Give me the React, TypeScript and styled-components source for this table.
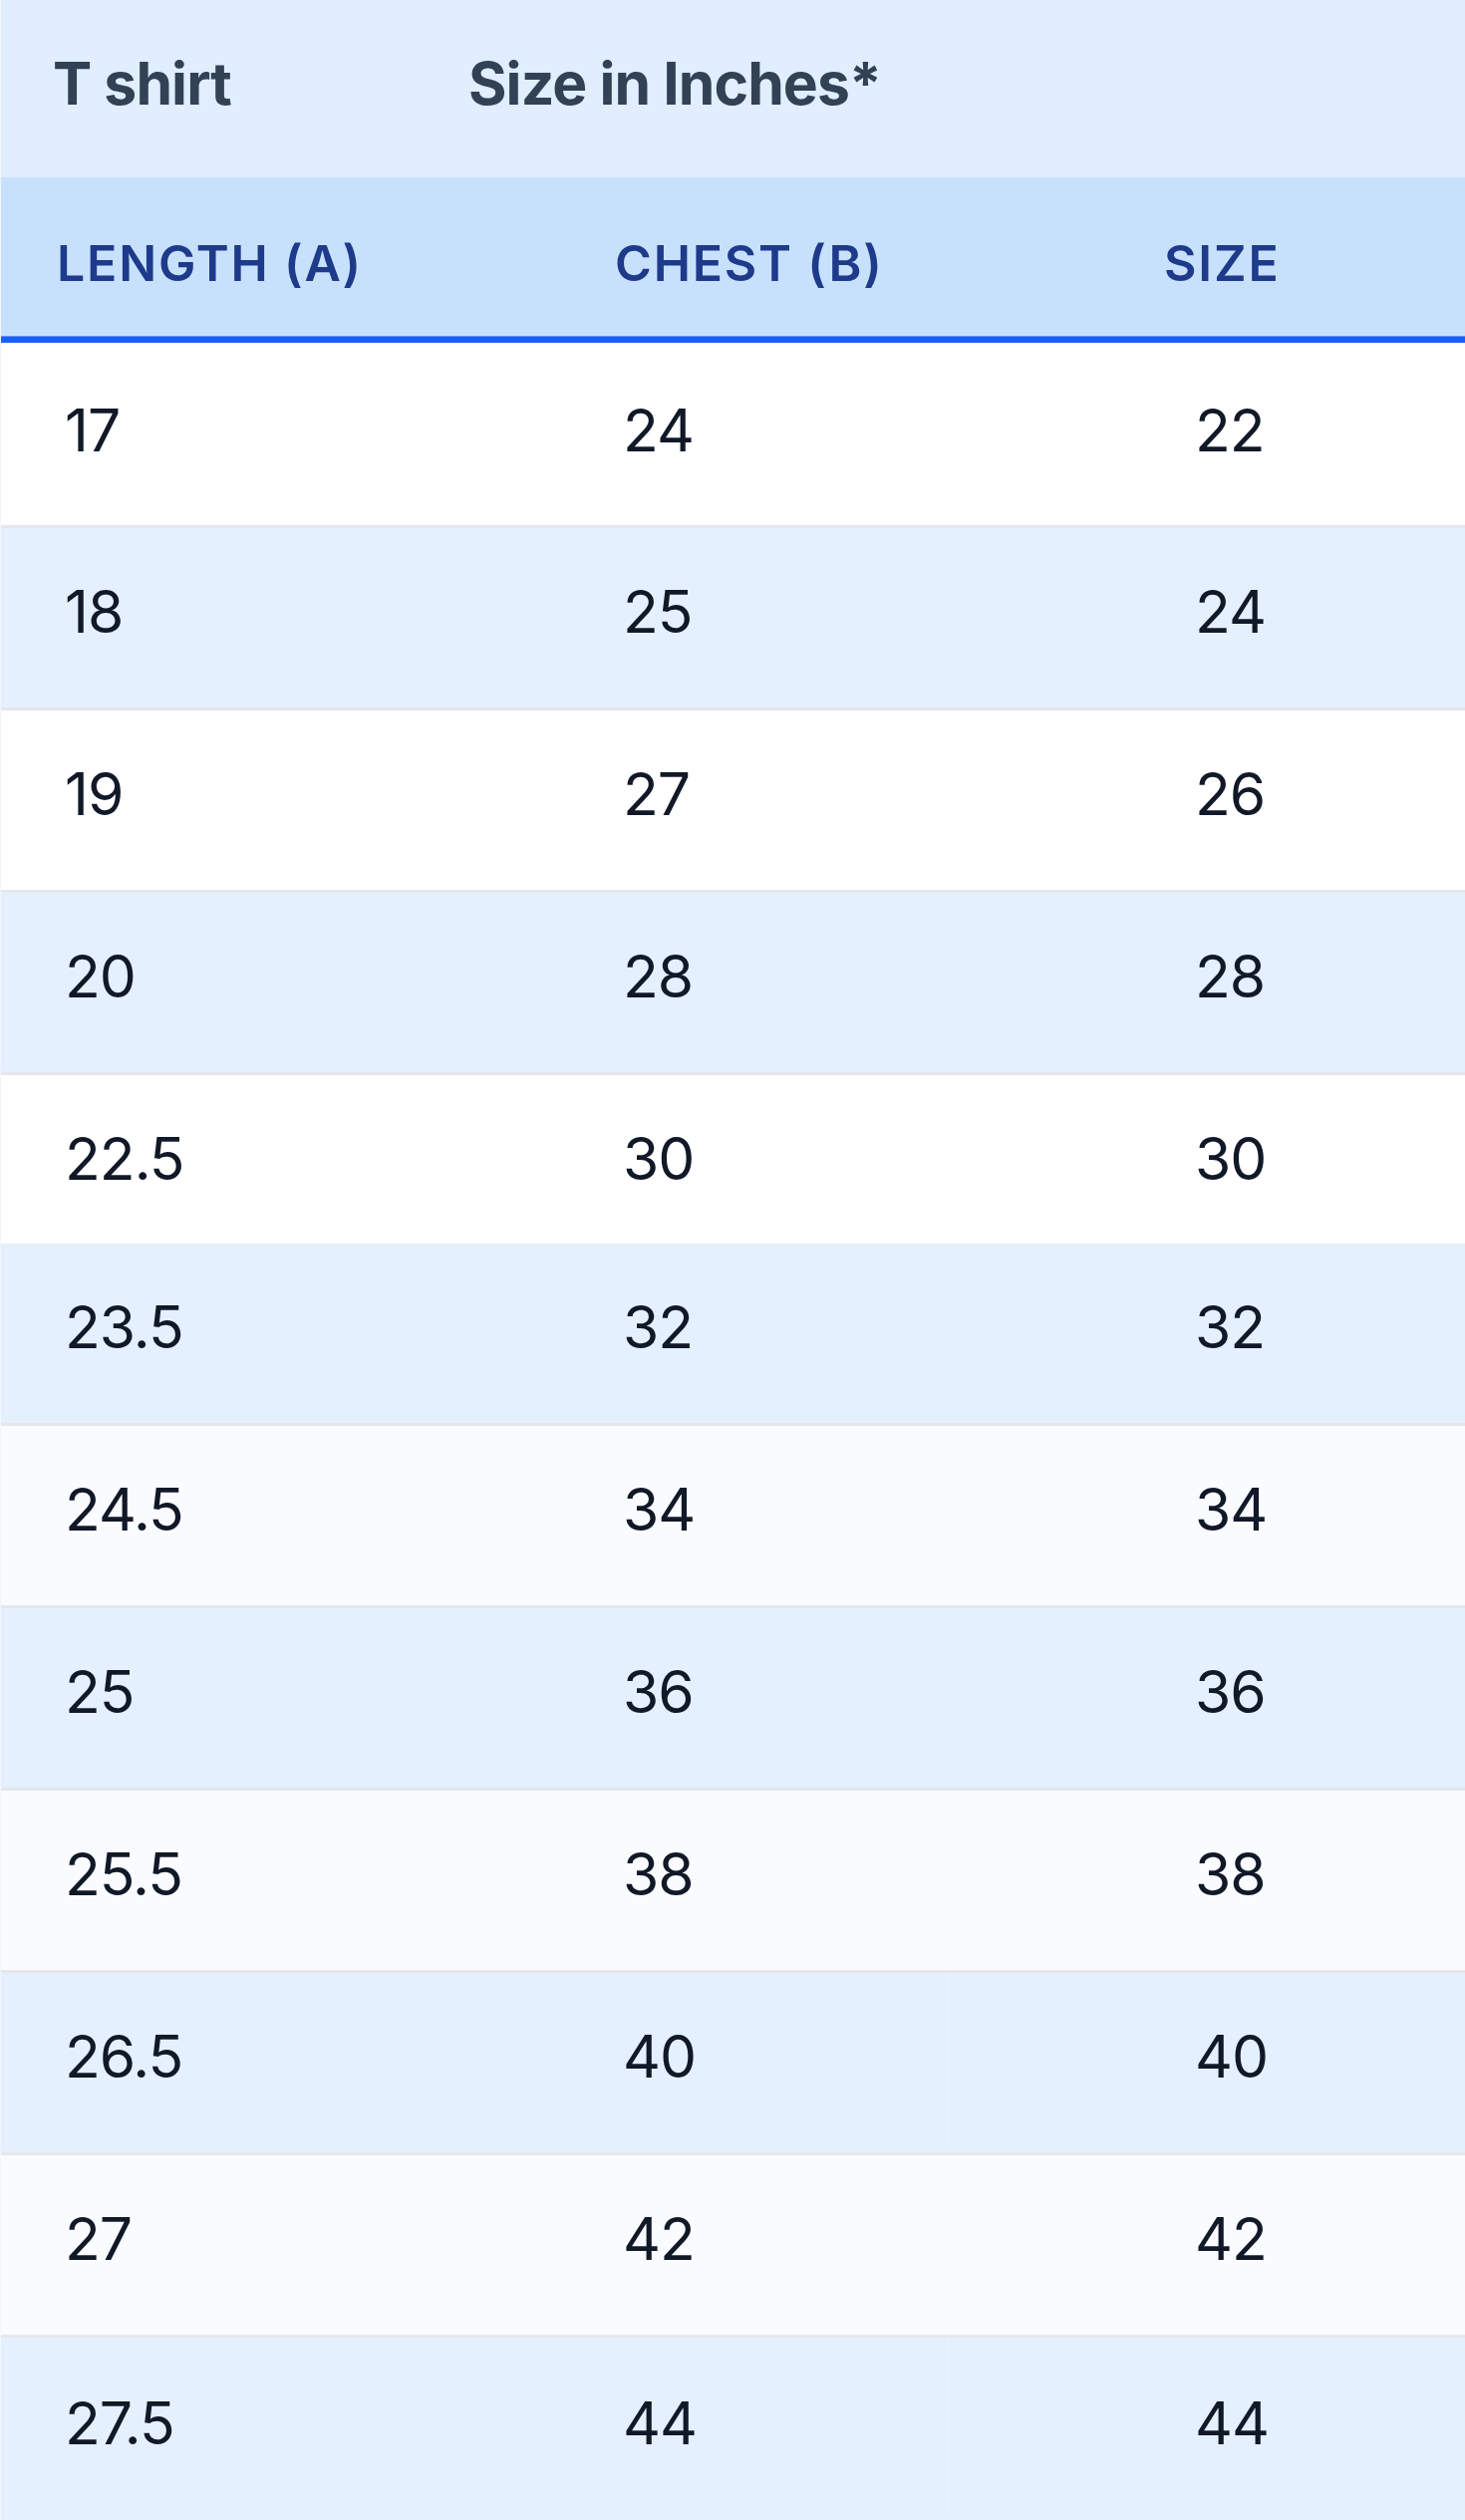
import styled, { createGlobalStyle } from 'styled-components';

type Tone = 'white' | 'blue' | 'mist';

interface SizeRow {
  length: string;
  chest: string;
  size: string;
  tone: Tone;
  // 22.5 row has no divider below it and sits a bit shorter
  flush?: boolean;
  // some blue rows show a faint seam before the size column
  split?: boolean;
}

const rows: SizeRow[] = [
  { length: '17', chest: '24', size: '22', tone: 'white' },
  { length: '18', chest: '25', size: '24', tone: 'blue' },
  { length: '19', chest: '27', size: '26', tone: 'white' },
  { length: '20', chest: '28', size: '28', tone: 'blue' },
  { length: '22.5', chest: '30', size: '30', tone: 'white', flush: true },
  { length: '23.5', chest: '32', size: '32', tone: 'blue' },
  { length: '24.5', chest: '34', size: '34', tone: 'mist' },
  { length: '25', chest: '36', size: '36', tone: 'blue' },
  { length: '25.5', chest: '38', size: '38', tone: 'mist' },
  { length: '26.5', chest: '40', size: '40', tone: 'blue', split: true },
  { length: '27', chest: '42', size: '42', tone: 'mist' },
  { length: '27.5', chest: '44', size: '44', tone: 'blue', split: true },
];

const toneColors: Record<Tone, string> = {
  white: '#ffffff',
  blue: '#e4f0fe',
  mist: '#f9fbff',
};

export default function App() {
  return (
    <>
      <GlobalStyle />
      <StyledChart>
        <StyledTitleRow>
          <StyledTitle>T shirt</StyledTitle>
          <StyledTitle>Size in Inches*</StyledTitle>
        </StyledTitleRow>

        <StyledHeadRow>
          <StyledHeadCell>Length (A)</StyledHeadCell>
          <StyledHeadCell>Chest (B)</StyledHeadCell>
          <StyledHeadCell $last>Size</StyledHeadCell>
        </StyledHeadRow>

        {rows.map((row, i) => (
          <StyledRow
            key={row.length}
            $tone={row.tone}
            $first={i === 0}
            $flush={row.flush}
            $lastRow={i === rows.length - 1}
          >
            <StyledCell>{row.length}</StyledCell>
            <StyledCell>{row.chest}</StyledCell>
            <StyledCell $last $split={row.split}>
              {row.size}
            </StyledCell>
          </StyledRow>
        ))}
      </StyledChart>
    </>
  );
}

const GlobalStyle = createGlobalStyle`
  *, *::before, *::after {
    box-sizing: border-box;
  }

  body {
    margin: 0;
    background: #ffffff;
    font-family: Inter, "Noto Sans", "Liberation Sans", sans-serif;
  }
`;

const StyledChart = styled.div`
  width: 1470px;
  border-left: 1px solid #f2f7ff;
`;

const StyledTitleRow = styled.div`
  display: grid;
  grid-template-columns: 417px 1fr;
  align-items: center;
  height: 178px;
  padding: 0 0 9px 52px;
  background: #e0eefe;
`;

const StyledTitle = styled.div`
  font-size: 58.8px;
  font-weight: 700;
  line-height: 1;
  letter-spacing: -0.9px;
  color: #334155;
`;

const StyledHeadRow = styled.div`
  display: grid;
  grid-template-columns: 560px 390px 1fr;
  align-items: center;
  height: 166px;
  padding-top: 11px;
  background: #c7e1fd;
  border-bottom: 6px solid #1b5eff;
  box-shadow: inset 0 -1px 0 #5d97ff;
`;

const StyledHeadCell = styled.div<{ $last?: boolean }>`
  padding-left: ${({ $last }) => ($last ? '217px' : '56px')};
  font-size: 50px;
  font-weight: 600;
  line-height: 1;
  letter-spacing: 1.8px;
  text-transform: uppercase;
  color: #1e3a8a;
`;

const StyledRow = styled.div<{
  $tone: Tone;
  $first?: boolean;
  $flush?: boolean;
  $lastRow?: boolean;
}>`
  display: grid;
  grid-template-columns: 560px 390px 1fr;
  align-items: stretch;
  height: ${({ $first, $flush }) =>
    $flush ? '169px' : $first ? '186px' : '183px'};
  padding-top: ${({ $first }) => ($first ? '4px' : '0')};
  padding-bottom: ${({ $flush, $first }) =>
    $flush ? '0' : $first ? '10px' : '11px'};
  background: ${({ $tone }) => toneColors[$tone]};
  border-bottom: ${({ $flush, $lastRow }) =>
    $flush || $lastRow ? 'none' : '3px solid #e5e7eb'};
`;

const StyledCell = styled.div<{ $last?: boolean; $split?: boolean }>`
  display: flex;
  align-items: center;
  padding-left: ${({ $last }) => ($last ? '248px' : '64px')};
  font-size: 58.8px;
  font-weight: 400;
  line-height: 1;
  letter-spacing: -1px;
  color: #111827;
  border-left: ${({ $split }) =>
    $split ? '1px solid #eef5ff' : '0 solid transparent'};
  margin-left: ${({ $split }) => ($split ? '-1px' : '0')};
`;
